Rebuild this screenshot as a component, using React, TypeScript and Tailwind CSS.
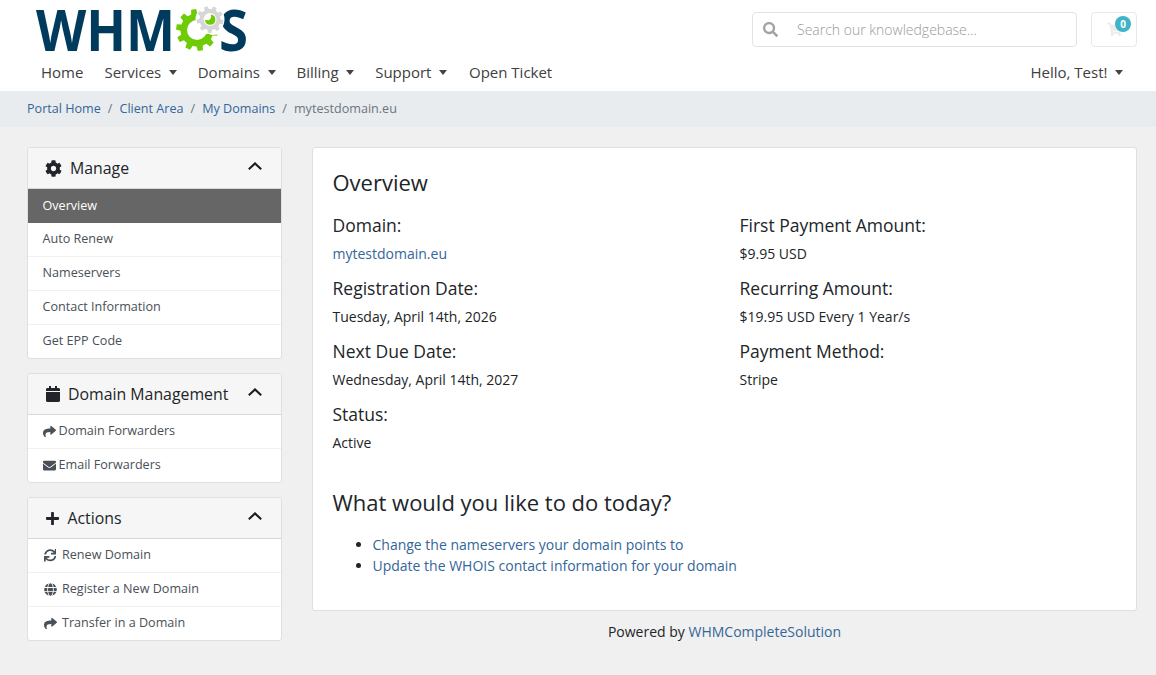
import { FaCog, FaCalendar, FaPlus, FaShare, FaEnvelope, FaSync, FaGlobe, FaSearch, FaShoppingCart } from "react-icons/fa";
import type { ReactNode } from "react";

function gearPath(cx: number, cy: number, rOuter: number, rInner: number, teeth: number, rot = 0) {
  const pts: string[] = [];
  const step = (Math.PI * 2) / teeth;
  for (let i = 0; i < teeth; i++) {
    const a = rot + i * step;
    const w = step * 0.28;
    const list: [number, number][] = [
      [rInner, a - step / 2 + w * 0.4],
      [rInner, a - w * 1.1],
      [rOuter, a - w * 0.7],
      [rOuter, a + w * 0.7],
      [rInner, a + w * 1.1],
      [rInner, a + step / 2 - w * 0.4],
    ];
    for (const [r, t] of list) pts.push(`${(cx + r * Math.cos(t)).toFixed(2)} ${(cy + r * Math.sin(t)).toFixed(2)}`);
  }
  return "M" + pts.join("L") + "Z";
}

function Logo() {
  return (
    <svg width="214" height="50" viewBox="0 0 214 50" className="block">
      <text x="0" y="47" fill="#003a5c" fontFamily="'Open Sans', sans-serif" fontWeight="700" fontSize="57" textLength="139" lengthAdjust="spacingAndGlyphs">WHM</text>
      <path d={gearPath(161, 26, 21, 16.5, 10, 0.15)} fill="#6fcb05" />
      <circle cx="161" cy="26" r="10" fill="#fff" />
      <path d="M161 26 L186 6 L190 30 L176 31 Z" fill="#fff" />
      <text x="183" y="47" fill="#003a5c" stroke="#fff" strokeWidth="1" paintOrder="stroke" fontFamily="'Open Sans', sans-serif" fontWeight="700" fontSize="57" textLength="29" lengthAdjust="spacingAndGlyphs">S</text>
      <circle cx="174" cy="15.5" r="14.5" fill="#fff" />
      <path d={gearPath(174, 15.5, 13.5, 10.5, 9, 0.2)} fill="#d6d6d6" />
      <circle cx="174" cy="15.5" r="6.5" fill="#fff" />
      <path d="M175 10.5a5.2 5.2 0 1 1 -6 5.6l4 .2 2 -2.4z" fill="#6fcb05" />
    </svg>
  );
}

function Caret() {
  return <span className="inline-block ml-[7.5px] w-0 h-0 align-[3px] border-t-[5px] border-x-[4px] border-t-[#444] border-x-transparent" />;
}

function NavItem({ label, caret }: { label: string; caret?: boolean }) {
  return (
    <span className="px-[10.5px] text-[#404040] whitespace-nowrap">
      {label}
      {caret && <Caret />}
    </span>
  );
}

function Chevron() {
  return (
    <svg width="14" height="8" viewBox="0 0 14 8" className="block" fill="none" stroke="#1d1d1f" strokeWidth="2.1">
      <path d="M0.8 7.2 L7 1.4 L13.2 7.2" />
    </svg>
  );
}

function Panel({ icon, title, gap, children }: { icon: ReactNode; title: string; gap: string; children: ReactNode }) {
  return (
    <div className="bg-white border border-[#dfdfdf] rounded-[3px] overflow-hidden">
      <div className="h-[41px] bg-[#f6f6f6] border-b border-[#d8d8d8] flex items-center pl-[17px] pr-[19.5px] text-[15.85px] text-[#212529]">
        <span className={`flex items-center text-[#212529] ${gap}`}>{icon}</span>
        <span className="flex-1 whitespace-nowrap pt-[2px]">{title}</span>
        <span className="mb-[4px]"><Chevron /></span>
      </div>
      {children}
    </div>
  );
}

function Row({ children, active, last }: { children: ReactNode; active?: boolean; last?: boolean }) {
  return (
    <div className={`flex items-center pl-[14.5px] text-[12.6px] ${active ? "h-[34px] bg-[#666] text-white" : last ? "h-[33px] text-[#495057]" : "h-[34px] text-[#495057] border-b border-[#f1f1f1]"}`}>
      {children}
    </div>
  );
}

function Field({ label, children, blue }: { label: string; children: ReactNode; blue?: boolean }) {
  return (
    <div className="h-[63px]">
      <div className="text-[17.5px] leading-[26px] text-[#212529] pt-[2px]">{label}</div>
      <div className={`text-[14px] leading-[21px] mt-[5px] ${blue ? "text-[#336699]" : "text-[#212529]"}`}>{children}</div>
    </div>
  );
}

export default function App() {
  return (
    <div className="min-h-[675px] bg-[#f0f0f0] font-['Open_Sans',sans-serif] overflow-hidden">
      <header className="bg-white h-[91px] flex flex-col">
        <div className="flex items-start h-[55px]">
          <div className="ml-[36px] mt-[4px]"><Logo /></div>
          <div className="ml-auto mt-[12px] flex items-center mr-[19px]">
            <div className="w-[325px] h-[35px] border border-[#e3e3e3] rounded-[4px] flex items-center pl-[10px]">
              <FaSearch className="text-[#a3a3a3] text-[15px]" />
              <span className="ml-[19px] text-[14px] text-[#9a9a9a] font-light">Search our knowledgebase...</span>
            </div>
            <div className="relative w-[46px] h-[35px] border border-[#e8e8e8] rounded-[4px] ml-[14px]">
              <FaShoppingCart className="absolute left-[15px] top-[9px] text-[#ececec] text-[15px]" />
              <span className="absolute left-[23px] top-[3px] w-[16px] h-[16px] rounded-full bg-[#3fb3c9] text-white text-[10px] font-bold flex items-center justify-center">0</span>
            </div>
          </div>
        </div>
        <nav className="flex items-center h-[34px] pl-[30.5px] pr-[22.5px] text-[15px]">
          <NavItem label="Home" />
          <NavItem label="Services" caret />
          <NavItem label="Domains" caret />
          <NavItem label="Billing" caret />
          <NavItem label="Support" caret />
          <span className="w-[1px]" />
          <NavItem label="Open Ticket" />
          <span className="ml-auto"><NavItem label="Hello, Test!" caret /></span>
        </nav>
      </header>

      <div className="h-[36px] bg-[#e9ecef] flex items-center pl-[27px] text-[12.6px] text-[#6c757d]">
        <span className="text-[#336699]">Portal Home</span>
        <span className="px-[7px]">/</span>
        <span className="text-[#336699]">Client Area</span>
        <span className="px-[7px]">/</span>
        <span className="text-[#336699]">My Domains</span>
        <span className="px-[7px]">/</span>
        <span>mytestdomain.eu</span>
      </div>

      <div className="flex items-start pl-[27px] pr-[19px] pt-[20px] gap-[30px]">
        <aside className="w-[255px] shrink-0 flex flex-col gap-[14px]">
          <Panel icon={<FaCog className="text-[17px]" />} gap="w-[25px]" title="Manage">
            <Row active>Overview</Row>
            <Row>Auto Renew</Row>
            <Row>Nameservers</Row>
            <Row>Contact Information</Row>
            <Row last>Get EPP Code</Row>
          </Panel>
          <Panel icon={<FaCalendar className="text-[16px]" />} gap="w-[23px]" title="Domain Management">
            <Row><FaShare className="text-[13px] mr-[3px]" />Domain Forwarders</Row>
            <Row last><FaEnvelope className="text-[13px] mr-[3px]" />Email Forwarders</Row>
          </Panel>
          <Panel icon={<FaPlus className="text-[15px]" />} gap="w-[22.5px]" title="Actions">
            <Row><FaSync className="text-[12.5px] ml-[1px] mr-[6px]" />Renew Domain</Row>
            <Row><FaGlobe className="text-[13px] ml-[1px] mr-[5.5px]" />Register a New Domain</Row>
            <Row last><FaShare className="text-[13px] ml-[1px] mr-[5.5px]" />Transfer in a Domain</Row>
          </Panel>
        </aside>

        <main className="flex-1 min-w-0">
          <div className="h-[464px] bg-white border border-[#dfdfdf] rounded-[3px] pl-[19.5px] pt-[19.5px]">
            <h2 className="text-[22px] leading-[28px] text-[#212529]">Overview</h2>
            <div className="grid grid-cols-[407px_1fr] mt-[14.5px]">
              <div>
                <Field label="Domain:" blue>mytestdomain.eu</Field>
                <Field label="Registration Date:">Tuesday, April 14th, 2026</Field>
                <Field label="Next Due Date:">Wednesday, April 14th, 2027</Field>
                <Field label="Status:">Active</Field>
              </div>
              <div>
                <Field label="First Payment Amount:">$9.95 USD</Field>
                <Field label="Recurring Amount:">$19.95 USD Every 1 Year/s</Field>
                <Field label="Payment Method:">Stripe</Field>
              </div>
            </div>
            <h2 className="text-[22px] leading-[28px] text-[#212529] mt-[25.5px]">What would you like to do today?</h2>
            <ul className="list-disc pl-[40px] mt-[18.5px] text-[14px] leading-[21px] text-[#336699] marker:text-[#212529]">
              <li>Change the nameservers your domain points to</li>
              <li>Update the WHOIS contact information for your domain</li>
            </ul>
          </div>
          <div className="text-center text-[14px] leading-[21px] mt-[10px] text-[#212529]">
            Powered by <span className="text-[#336699]">WHMCompleteSolution</span>
          </div>
        </main>
      </div>
    </div>
  );
}
